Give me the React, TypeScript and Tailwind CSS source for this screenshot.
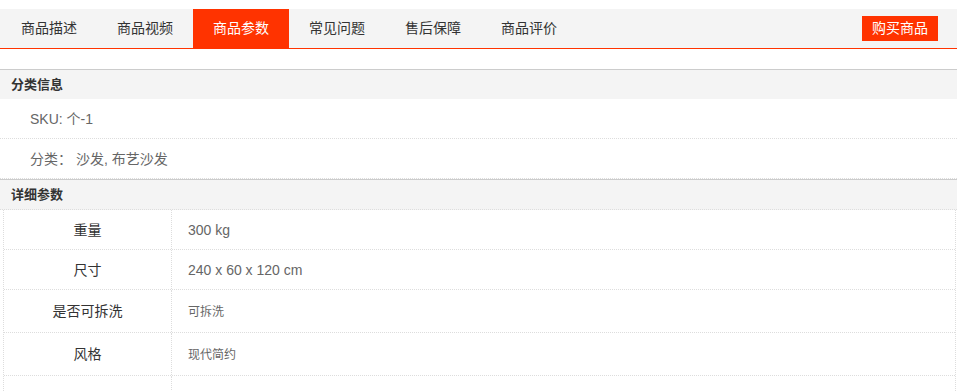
import React from "react";

const tabs = ["商品描述", "商品视频", "商品参数", "常见问题", "售后保障", "商品评价"];

const params: { label: string; value: string; small?: boolean; h: string }[] = [
  { label: "重量", value: "300 kg", h: "h-[39px]" },
  { label: "尺寸", value: "240 x 60 x 120 cm", h: "h-[39px]" },
  { label: "是否可拆洗", value: "可拆洗", small: true, h: "h-[42px]" },
  { label: "风格", value: "现代简约", small: true, h: "h-[42px]" },
  { label: "", value: "", small: true, h: "h-[42px]" },
];

export default function App() {
  return (
    <div
      className="w-[957px] bg-white text-[#333]"
      style={{ fontFamily: '"Liberation Sans", Arial, "Noto Sans CJK SC", sans-serif' }}
    >
      <div className="mt-[9px] flex h-[40px] items-stretch border-b border-[#ff3300] bg-[#f4f4f4] pl-px">
        {tabs.map((t, i) => (
          <div
            key={t}
            className={
              i === 2
                ? "flex w-[96px] items-center justify-center bg-[#ff3300] text-[14px] text-white"
                : "flex w-[96px] items-center justify-center text-[14px] text-[#333]"
            }
          >
            {t}
          </div>
        ))}
        <div className="ml-auto mr-[19px] flex items-center">
          <div className="mb-px flex h-[25px] w-[76px] items-center justify-center bg-[#ff3300] text-[14px] text-white">
            购买商品
          </div>
        </div>
      </div>

      <div className="mt-[20px] border-t border-[#ccc]">
        <div className="flex h-[29px] items-center bg-[#f4f4f4] pl-[11px] text-[13px] font-bold text-[#333]">
          分类信息
        </div>
        <div className="flex h-[40px] items-center border-b border-dotted border-[#ddd] pl-[30px] pt-px text-[14px] text-[#666]">
          SKU: 个-1
        </div>
        <div className="flex h-[40px] items-center border-b border-dotted border-[#ddd] pl-[30px] pt-px text-[14px] text-[#666]">
          分类：&nbsp;沙发, 布艺沙发
        </div>
      </div>

      <div className="border-t border-[#ccc]">
        <div className="flex h-[30px] items-center border-b border-dotted border-[#ddd] bg-[#f4f4f4] pl-[11px] text-[13px] font-bold text-[#333]">
          详细参数
        </div>
        <div className="ml-[3px] w-[953px] border-x border-dotted border-[#ddd]">
          {params.map((p, i) => (
            <div key={i} className="flex border-b border-dotted border-[#ddd]">
              <div
                className={`flex w-[168px] shrink-0 items-center justify-center border-r border-dotted border-[#ddd] pt-px text-[14px] text-[#333] ${p.h}`}
              >
                {p.label}
              </div>
              <div
                className={`flex flex-1 items-center pl-4 pt-px text-[#666] ${p.small ? "text-[12px]" : "text-[14px]"} ${p.h}`}
              >
                {p.value}
              </div>
            </div>
          ))}
        </div>
      </div>
    </div>
  );
}
